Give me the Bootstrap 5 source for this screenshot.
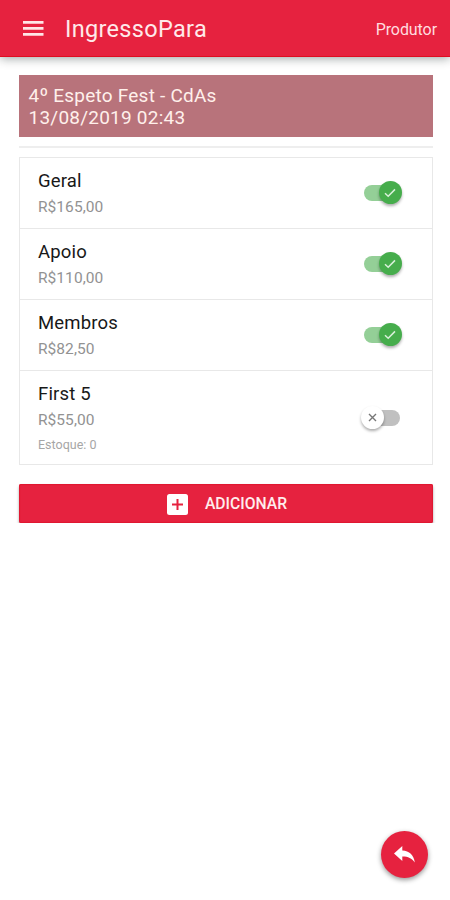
<!DOCTYPE html>
<html lang="pt-BR">
<head>
<meta charset="utf-8">
<meta name="viewport" content="width=device-width, initial-scale=1">
<title>IngressoPara</title>
<link rel="stylesheet" href="https://cdn.jsdelivr.net/npm/bootstrap@5.3.0/dist/css/bootstrap.min.css">
<style>
:root { --brand: #e6223f; }
body { font-family: Roboto, "Liberation Sans", sans-serif; color: #181818; }
.topbar { height: 56px; background: var(--brand); box-shadow: 0 1px 0 #df0d20, 0 2px 10px rgba(0,20,20,.42); padding: 1px 13px 0 23px; }
.title { font-size: 23.5px; line-height: 28px; letter-spacing: .32px; margin-left: 21px; padding-top: 1px; color: #ffe9ea; }
.role { font-size: 16px; line-height: 20px; letter-spacing: -.08px; padding-top: 2px; color: #ffdcdf; }
.content { padding: 18px 17px 0 18.5px; margin-top: 1px; }
.event { height: 62px; width: 414px; background: #b8737b; color: #fff0eb; font-size: 19px; line-height: 22px; letter-spacing: .23px; padding: 10px 10px 0; }
.rule { height: 2px; width: 414px; margin-top: 9px; background: #eee; }
.tickets { margin-top: 9px; width: 414px; --bs-list-group-border-color: #e8e8e8; --bs-list-group-border-radius: 0; }
.ticket { height: 71px; padding: 13px 32px 0 18.5px; color: #181818; --bs-list-group-border-width: 1.5px; border-color: #e8e8e8; }
.ticket-first { height: 72px; }
.ticket-tall { height: 94px; }
.ticket-name { font-size: 18.5px; line-height: 21px; letter-spacing: .18px; }
.ticket-price { font-size: 15.5px; line-height: 20px; margin-top: 4.5px; letter-spacing: .05px; color: #929292; }
.ticket-stock { font-size: 12.5px; line-height: 16px; margin-top: 7px; color: #a6a6a6; }
.toggle { width: 36px; height: 16px; background: #94cf97; margin-top: 14px; }
.knob { width: 23px; height: 23px; top: -4px; left: 15px; background: #46ad4c; box-shadow: 0 2px 3px rgba(0,0,0,.32); }
.toggle-off { background: #c0c0c0; margin-top: 26px; }
.toggle-off .knob { left: -3px; background: #fff; }
.btn-add { width: 414px; height: 39px; margin-top: 19px; padding: 1px 0 0 3px; border: 0; border-radius: 2px; --bs-btn-bg: var(--brand); --bs-btn-color: #fff; background: var(--brand); box-shadow: inset 0 0 1px 1px #df1730, 0 2px 3px rgba(0,0,0,.35); font-size: 15.7px; font-weight: 500; color: #ffeded; gap: 17px; }
.fab { right: 22px; bottom: 22px; width: 47px; height: 47px; background: var(--brand); box-shadow: 0 2px 5px rgba(0,0,0,.42); border: 0; }
</style>
</head>
<body class="bg-white">
<header class="topbar d-flex align-items-center">
  <svg width="21" height="15" viewBox="0 0 21 15" fill="#ffe6e7" role="img" aria-label="Menu"><path d="M0 0h20.5v2.800H0zM0 6h20.5v2.800H0zM0 12h20.5v2.800H0z"/></svg>
  <div class="title text-nowrap">IngressoPara</div>
  <div class="role ms-auto">Produtor</div>
</header>
<main class="content">
  <div class="event"><div>4º Espeto Fest - CdAs</div><div>13/08/2019 02:43</div></div>
  <div class="rule"></div>
  <div class="list-group tickets">
    <div class="list-group-item ticket ticket-first d-flex justify-content-between">
      <div><div class="ticket-name">Geral</div><div class="ticket-price">R$165,00</div></div>
      <div class="toggle rounded-pill position-relative"><span class="knob rounded-circle position-absolute d-flex align-items-center justify-content-center"><svg width="12" height="10" viewBox="0 0 12 10" fill="none" stroke="#d9f0da" stroke-width="1.5"><path d="M1 5.3 4.2 8.3 11 1.4"/></svg></span></div>
    </div>
    <div class="list-group-item ticket d-flex justify-content-between">
      <div><div class="ticket-name">Apoio</div><div class="ticket-price">R$110,00</div></div>
      <div class="toggle rounded-pill position-relative"><span class="knob rounded-circle position-absolute d-flex align-items-center justify-content-center"><svg width="12" height="10" viewBox="0 0 12 10" fill="none" stroke="#d9f0da" stroke-width="1.5"><path d="M1 5.3 4.2 8.3 11 1.4"/></svg></span></div>
    </div>
    <div class="list-group-item ticket d-flex justify-content-between">
      <div><div class="ticket-name">Membros</div><div class="ticket-price">R$82,50</div></div>
      <div class="toggle rounded-pill position-relative"><span class="knob rounded-circle position-absolute d-flex align-items-center justify-content-center"><svg width="12" height="10" viewBox="0 0 12 10" fill="none" stroke="#d9f0da" stroke-width="1.5"><path d="M1 5.3 4.2 8.3 11 1.4"/></svg></span></div>
    </div>
    <div class="list-group-item ticket ticket-tall d-flex justify-content-between">
      <div><div class="ticket-name">First 5</div><div class="ticket-price">R$55,00</div><div class="ticket-stock">Estoque: 0</div></div>
      <div class="toggle toggle-off rounded-pill position-relative"><span class="knob rounded-circle position-absolute d-flex align-items-center justify-content-center"><svg width="9" height="9" viewBox="0 0 9 9" fill="none" stroke="#777" stroke-width="1.4"><path d="M1 1 8 8M8 1 1 8"/></svg></span></div>
    </div>
  </div>
  <button type="button" class="btn btn-add d-flex align-items-center justify-content-center">
    <svg width="21" height="21" viewBox="0 0 21 21"><rect width="21" height="21" rx="2.5" fill="#fff"/><path d="M10.5 5v11M5 10.5h11" stroke="#e6223f" stroke-width="2"/></svg>
    <span>ADICIONAR</span>
  </button>
</main>
<button type="button" class="fab position-fixed rounded-circle d-flex align-items-center justify-content-center p-0" aria-label="Voltar">
  <svg width="21" height="17" viewBox="0 0 21 17" fill="#fff"><path d="M0 7.5 8.3 0v4.4c7 .3 11.5 4.4 12.5 12-3-4.3-7-6-12.5-5.900V15z"/></svg>
</button>
<script src="https://cdn.jsdelivr.net/npm/bootstrap@5.3.0/dist/js/bootstrap.bundle.min.js"></script>
</body>
</html>
